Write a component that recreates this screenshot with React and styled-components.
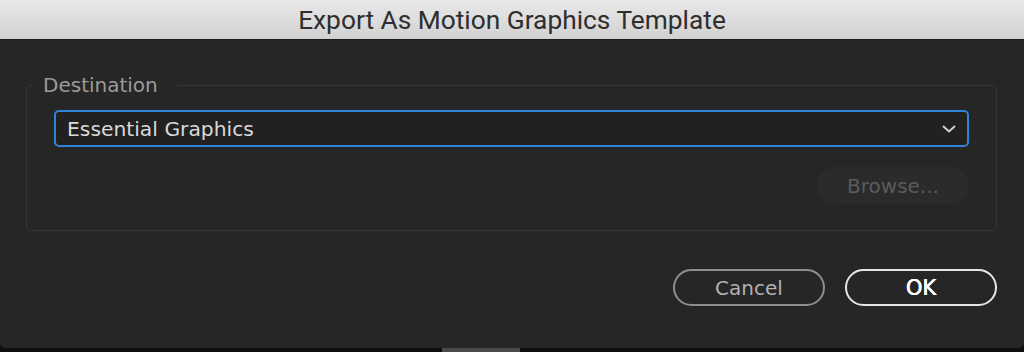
import React from 'react'
import styled, { createGlobalStyle } from 'styled-components'

const Global = createGlobalStyle`
  html, body {
    margin: 0;
    padding: 0;
    background: #0e0e0e;
  }
  * { box-sizing: border-box; }
`

const Window = styled.div`
  width: 1024px;
  height: 348px;
  background: #262626;
  border-bottom-left-radius: 5px;
  border-bottom-right-radius: 5px;
  display: flex;
  flex-direction: column;
  font-family: "DejaVu Sans", "Liberation Sans", sans-serif;
  overflow: hidden;
`

const TitleBar = styled.div`
  height: 40px;
  background: linear-gradient(#e9e9e9, #d1d1d1);
  border-bottom: 1px solid #1b1b1b;
  display: flex;
  align-items: center;
  justify-content: center;
  padding-top: 1px;
  font-family: "Roboto", "Liberation Sans", sans-serif;
  font-size: 26.3px;
  color: #2e2e2e;
`

const Content = styled.div`
  flex: 1;
  display: flex;
  flex-direction: column;
  padding: 34px 27px 0 26px;
`

const Group = styled.fieldset`
  margin: 0;
  padding: 14px 27px 26px 27px;
  border: 1px solid #363636;
  border-radius: 5px;
  display: flex;
  flex-direction: column;
  gap: 20px;
`

const Legend = styled.legend`
  margin-left: -21px;
  padding: 0 19px 0 10px;
  font-size: 20px;
  line-height: 22px;
  color: #9b9b9b;
`

const Select = styled.div`
  height: 37px;
  border: 2px solid #2f84da;
  border-radius: 5px;
  background: #212121;
  display: flex;
  align-items: center;
  justify-content: space-between;
  padding: 0 10px 0 11px;
  font-size: 20.3px;
  color: #d9d9d9;
`

const Chevron = styled.svg`
  width: 16px;
  height: 10px;
`

const Row = styled.div`
  display: flex;
  justify-content: flex-end;
  gap: 20px;
`

const Pill = styled.button`
  width: 152px;
  height: 37px;
  border-radius: 19px;
  background: ${p => p.$fill || 'transparent'};
  border: 2px solid ${p => p.$line || 'transparent'};
  color: ${p => p.$ink};
  font-family: "DejaVu Sans", "Liberation Sans", sans-serif;
  font-size: ${p => p.$size || 20}px;
  text-shadow: ${p => (p.$strong ? '0 0 0.6px #fff, 0.3px 0 0 #fff' : 'none')};
  display: flex;
  align-items: center;
  justify-content: center;
  padding: 0;
`

const Footer = styled(Row)`
  margin-top: 38px;
`

const Bottom = styled.div`
  height: 4px;
  display: flex;
  padding-left: 442px;
`

const Handle = styled.div`
  width: 78px;
  background: #4a4a4a;
`

export default function App() {
  return (
    <>
      <Global />
      <Window>
        <TitleBar>Export As Motion Graphics Template</TitleBar>
        <Content>
          <Group>
            <Legend>Destination</Legend>
            <Select>
              <span>Essential Graphics</span>
              <Chevron viewBox="0 0 16 10">
                <path d="M2 2 L8 7.5 L14 2" fill="none" stroke="#d0d0d0" strokeWidth="2" />
              </Chevron>
            </Select>
            <Row>
              <Pill $fill="#2b2b2b" $ink="#5b5b5b" $size={20}>Browse...</Pill>
            </Row>
          </Group>
          <Footer>
            <Pill $line="#8e8e8e" $ink="#b2b2b2">Cancel</Pill>
            <Pill $line="#e6e6e6" $ink="#ffffff" $size={21} $strong>OK</Pill>
          </Footer>
        </Content>
      </Window>
      <Bottom><Handle /></Bottom>
    </>
  )
}
